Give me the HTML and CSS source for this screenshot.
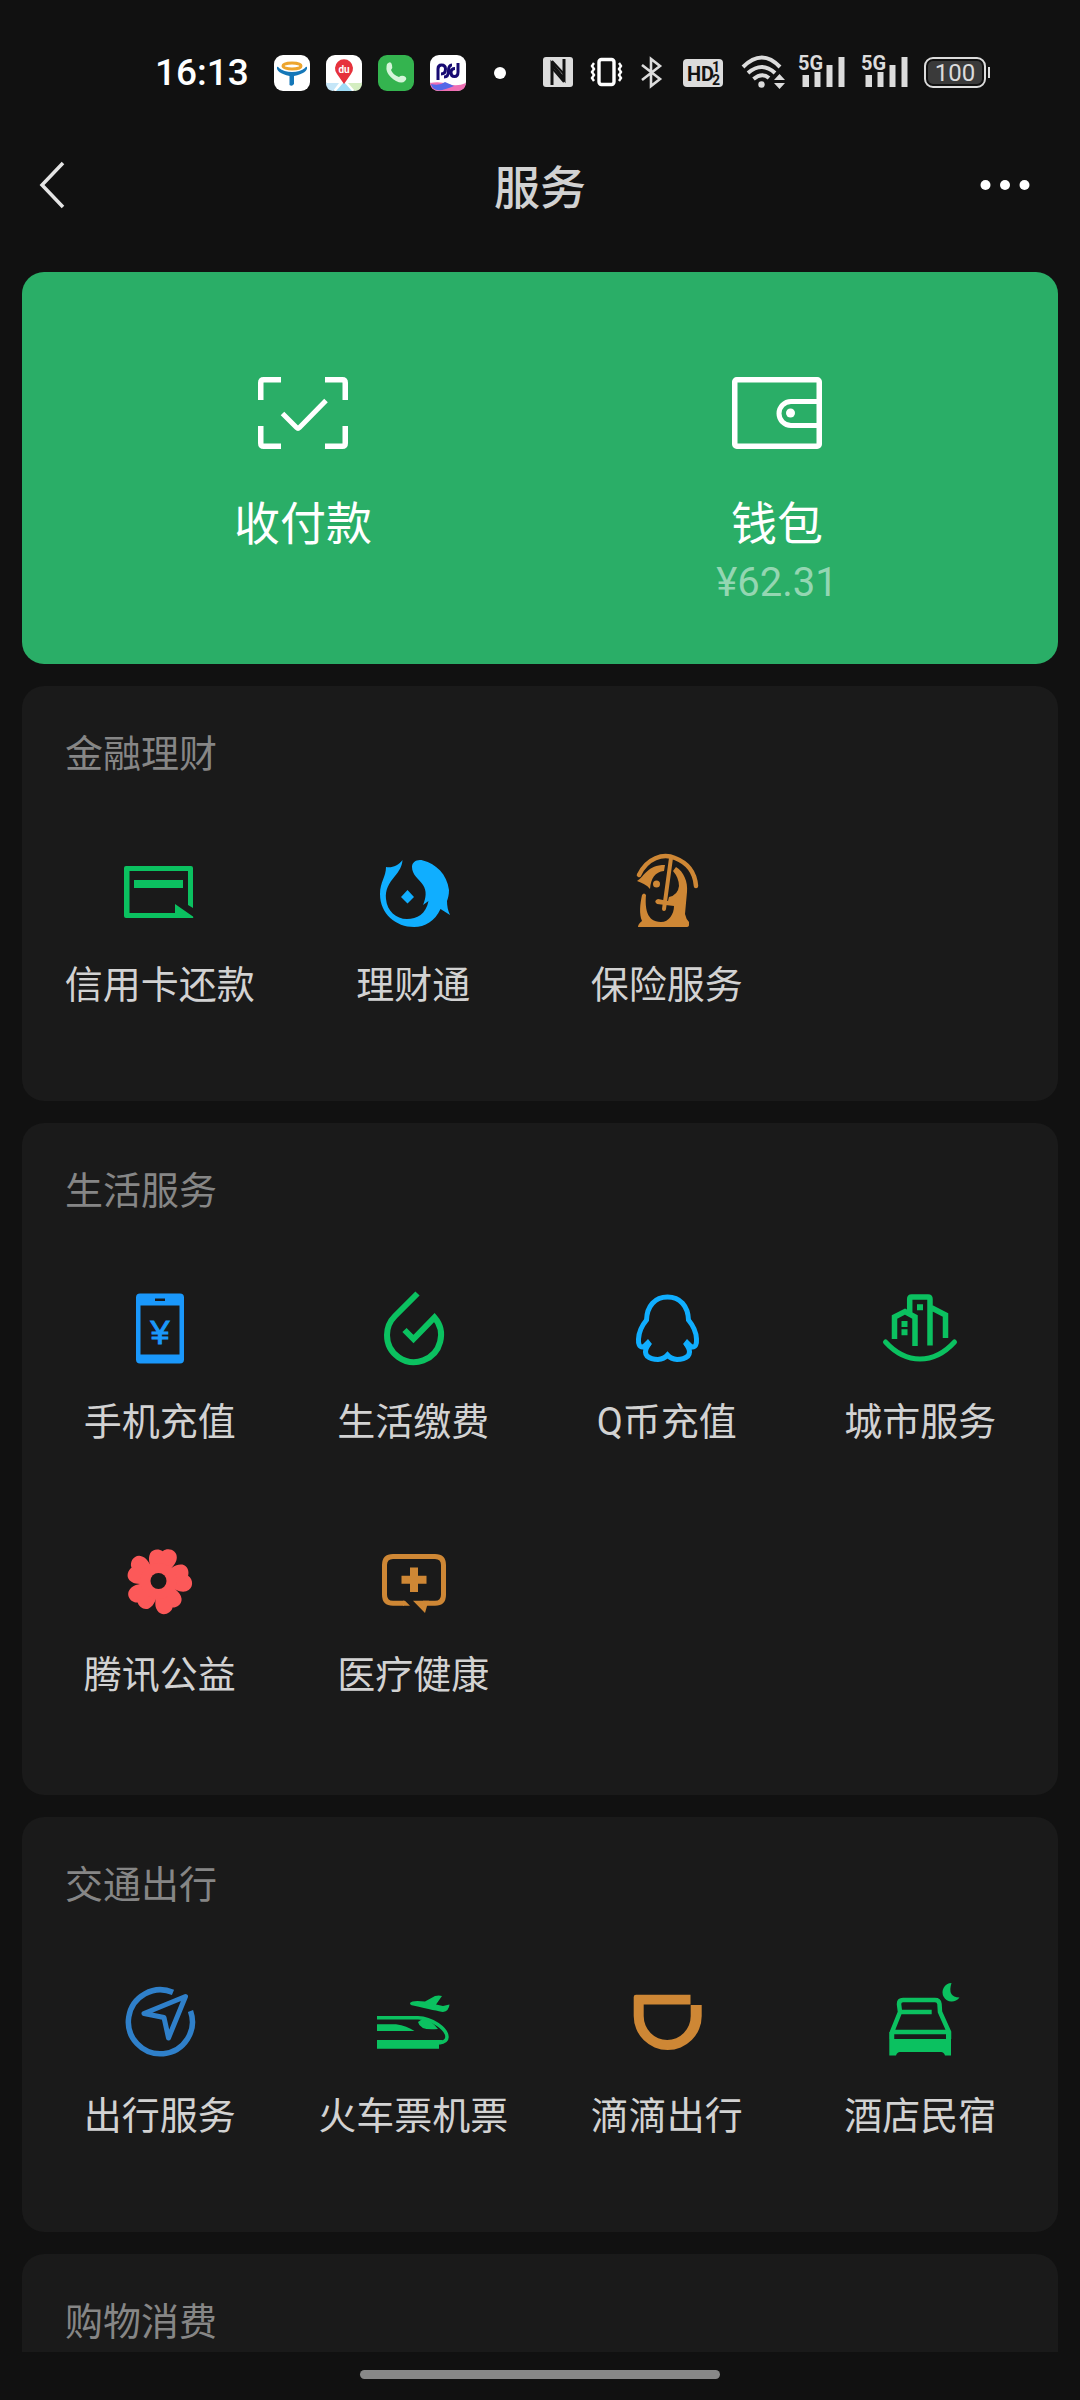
FILE: index.html
```html
<!DOCTYPE html>
<html lang="zh-CN">
<head>
<meta charset="utf-8">
<meta name="viewport" content="width=device-width, initial-scale=1">
<title>服务</title>
<link rel="stylesheet" href="styles.css">
</head>
<body>
<div class="screen">
  <div class="status">
    <div class="status-group">
      <time class="clock">16:13</time>
      <svg width="36" height="36" viewBox="0 0 36 36" aria-hidden="true">
        <rect width="36" height="36" rx="9" fill="#fff"/>
        <ellipse cx="18" cy="11" rx="9" ry="3" fill="none" stroke="#eda52d" stroke-width="3"/>
        <path d="M3 12Q4 11 5 13Q10 17 18 17T31 13Q32 11 33 12Q34 18 20 21V29Q18 32 15.500 30V21Q2 18 3 12Z" fill="#1477b8"/>
      </svg>
      <svg width="36" height="36" viewBox="0 0 36 36" aria-hidden="true">
        <rect width="36" height="36" rx="9" fill="#fff"/>
        <path d="M0 28H13L7 36Q0 35 0 28Z" fill="#c5e6f8"/>
        <path d="M22 28H36Q36 35 29 36Z" fill="#d3edc0"/>
        <path d="M18 27L26 36H10Z" fill="#9fdcf6"/>
        <path d="M18 29L11 19A9 9 0 1 1 25 19Z" fill="#e6323c"/>
        <text x="18" y="18" text-anchor="middle" class="pin-text">du</text>
      </svg>
      <svg width="36" height="36" viewBox="0 0 36 36" aria-hidden="true">
        <rect width="36" height="36" rx="9" fill="#34b44f"/>
        <path d="M9 9Q13 5 14 10Q15 13 13 15Q15 20 21 22Q23 20 26 21Q30 23 27 26Q24 29 18 26Q6 19 9 9Z" fill="#d5f5d9"/>
      </svg>
      <svg width="36" height="36" viewBox="0 0 36 36" aria-hidden="true">
        <rect width="36" height="36" rx="9" fill="#fff"/>
        <path d="M0 28Q9 26 18 29T36 28Q35 36 27 36H9Q1 36 0 28Z" fill="#ef6fb4"/>
        <path d="M1 29Q10 31 15 27L24 31Q13 36 7 35Q2 34 1 29Z" fill="#5468e8"/>
        <path d="M8 25V14Q8 10 11.500 10Q15.500 10 15.500 14Q15.500 19 11 19M14 22Q18.500 22 18.500 16Q18.500 10 22 10M28 8V17Q28 21.500 24.500 21.500Q21 21.500 21 17.500Q21 13.500 25 13.500" fill="none" stroke="#170a72" stroke-width="3"/>
      </svg>
      <span class="more-dot"></span>
    </div>
    <div class="status-group">
      <svg width="30" height="36" viewBox="0 0 30 36" aria-hidden="true">
        <rect y="2" width="30" height="30" rx="3" fill="#dcdcdc"/>
        <path d="M9 30V9L21 24V4" fill="none" stroke="#111" stroke-width="3"/>
        <path d="M9 6L21 19M9 13L21 27" stroke="#111" stroke-width="2"/>
      </svg>
      <svg width="35" height="36" viewBox="0 0 35 36" aria-hidden="true">
        <rect x="10" y="4.500" width="15" height="25" rx="2.500" fill="none" stroke="#fff" stroke-width="3.400"/>
        <path d="M5 8L3 11L5 14L3 17L5 20L3 23L5 26M30 8L32 11L30 14L32 17L30 20L32 23L30 26" fill="none" stroke="#fff" stroke-width="2.400"/>
      </svg>
      <svg width="25" height="36" viewBox="0 0 25 36" aria-hidden="true">
        <path d="M2 10L20 24L11 31V4L20 11L2 25" fill="none" stroke="#dcdcdc" stroke-width="2.600"/>
      </svg>
      <svg width="42" height="36" viewBox="0 0 42 36" aria-hidden="true">
        <rect x="2" y="4" width="40" height="28" rx="4" fill="#dcdcdc"/>
        <text x="6" y="26" class="hd-text">HD</text>
        <text x="31" y="17" class="hd-digit">1</text>
        <text x="31" y="30" class="hd-digit">2</text>
      </svg>
      <svg width="43" height="36" viewBox="0 0 43 36" aria-hidden="true">
        <path d="M4 12Q23 -7 41 12M9 18Q23 6 36 18M14.500 24Q23 17 30 23" fill="none" stroke="#dcdcdc" stroke-width="4"/>
        <circle cx="22.500" cy="29.500" r="3.200" fill="#dcdcdc"/>
        <path d="M35 25L40.500 19L46 25ZM35 28H46L40.500 34Z" fill="#dcdcdc"/>
      </svg>
      <svg width="47" height="36" viewBox="0 0 47 36" aria-hidden="true">
        <text x="0" y="15" class="net-text">5G</text>
        <path d="M4.500 20H11V32H4.500ZM16.500 17H22.500V32H16.500ZM28.500 10H34.500V32H28.500ZM40.500 2H46.500V32H40.500Z" fill="#dcdcdc"/>
      </svg>
      <svg width="47" height="36" viewBox="0 0 47 36" aria-hidden="true">
        <text x="0" y="15" class="net-text">5G</text>
        <path d="M4.500 20H11V32H4.500ZM16.500 17H22.500V32H16.500ZM28.500 10H34.500V32H28.500ZM40.500 2H46.500V32H40.500Z" fill="#dcdcdc"/>
      </svg>
      <svg width="66" height="36" viewBox="0 0 66 36" aria-hidden="true">
        <rect x="1" y="3" width="60" height="29" rx="8" fill="none" stroke="#dcdcdc" stroke-width="2"/>
        <rect x="4" y="6" width="54" height="23" rx="5" fill="#3a3a3a"/>
        <path d="M65 12V23" stroke="#dcdcdc" stroke-width="2"/>
        <text x="31" y="26" text-anchor="middle" class="battery-text">100</text>
      </svg>
    </div>
  </div>

  <header class="header">
    <button class="icon-button" type="button" aria-label="返回">
      <svg width="28" height="48" viewBox="0 0 28 48"><path d="M25 2L4 24L25 46" fill="none" stroke="#e4e4e4" stroke-width="3.500"/></svg>
    </button>
    <h1 class="title">服务</h1>
    <button class="icon-button" type="button" aria-label="更多">
      <svg width="50" height="48" viewBox="0 0 50 48"><g fill="#fff"><circle cx="5.500" cy="24" r="5"/><circle cx="25" cy="24" r="5"/><circle cx="44.500" cy="24" r="5"/></g></svg>
    </button>
  </header>

  <main class="content">
    <nav class="wallet">
      <a class="wallet-item" href="#pay">
        <svg width="90" height="72" viewBox="0 0 90 72" fill="none" stroke="#fff" stroke-width="5.500">
          <path d="M2.750 23V5.750Q2.750 2.750 5.750 2.750H23M67 2.750H84.250Q87.250 2.750 87.250 5.750V23M87.250 49V66.250Q87.250 69.250 84.250 69.250H67M23 69.250H5.750Q2.750 69.250 2.750 66.250V49"/>
          <path d="M24.500 36.500L38.500 50.500Q40 52 41.500 50.500L68 23.500" stroke-width="5"/>
        </svg>
        <span class="wallet-label">收付款</span>
      </a>
      <a class="wallet-item" href="#wallet">
        <svg width="90" height="72" viewBox="0 0 90 72" fill="none" stroke="#fff" stroke-width="5.500">
          <rect x="2.750" y="2.750" width="84.500" height="66.500" rx="2"/>
          <path d="M87 24.500H59A12 12 0 0 0 59 48.500H87" stroke-width="5"/>
          <circle cx="58.500" cy="36" r="4.500" fill="#fff" stroke="none"/>
        </svg>
        <span class="wallet-label">钱包</span>
        <span class="wallet-amount">¥62.31</span>
      </a>
    </nav>

    <section class="card">
      <h2 class="card-title">金融理财</h2>
      <ul class="tiles">
        <li><a class="tile" href="#credit">
          <svg class="tile-icon green" viewBox="0 0 80 80"><path d="M73 56V16Q73 14 71 14H6Q4 14 4 16V64Q4 66 6 66H72Q74 66 73 64.500L55 52V61H9.500V19H68V53ZM14 28H63V36H14Z"/></svg>
          <span class="tile-label">信用卡还款</span></a></li>
        <li><a class="tile" href="#licaitong">
          <svg class="tile-icon sky" viewBox="0 0 80 80"><path d="M29.500 8C29 15 26 19 22 24C16 31 12 38 13 47C14 59 23 67 34 67C44 67 53 62 55.500 49L50 53C53 46 54 39 50 33C46 27 39 23 39 15C39 10 44 7 50 8.500C63 12 74 22 76 38C76 43 75 46 74 49C74 54 75 59 77 63L67.500 57C62 69 52 75 41 75C23 75 7 62 7 42C7 30 13 25 13 15C19 16 25 14 29.500 8ZM34.500 38L41 45L34.500 51.500L28 45Z"/></svg>
          <span class="tile-label">理财通</span></a></li>
        <li><a class="tile" href="#insurance">
          <svg class="tile-icon orange" viewBox="0 0 80 80">
            <path d="M12 23C20 6 36 1 48 6C61 11 68 21 69 34" fill="none" stroke="currentColor" stroke-width="4.500" stroke-linecap="round"/>
            <path d="M44 6L37 57" fill="none" stroke="currentColor" stroke-width="4" stroke-linecap="round"/>
            <path d="M49 15C57 20 61 30 60 40L58 62Q59 67 62 70V73Q62 75 59 75H11Q11 72 15 69C12 62 13 52 15 43Q17 40 19 43C18 55 19 70 34 70C42 70 47 62 47 54L30 52Q26 49 31 47L41 49L42 45Q51 43 52 34Q52 26 46 19Z"/>
            <path d="M10 29C18 24 20 13 38 13L37 19C28 20 24 26 23 37C20 33 15 31 10 29Z"/>
            <circle cx="29.500" cy="32" r="3.500"/>
          </svg>
          <span class="tile-label">保险服务</span></a></li>
      </ul>
    </section>

    <section class="card card-tall">
      <h2 class="card-title">生活服务</h2>
      <ul class="tiles">
        <li><a class="tile" href="#topup">
          <svg class="tile-icon blue" viewBox="0 0 80 80"><path fill-rule="evenodd" d="M20 4.500H60Q64 4.500 64 8.500V70.500Q64 74.500 60 74.500H20Q16 74.500 16 70.500V8.500Q16 4.500 20 4.500ZM20.500 16.500V65.500H59.500V16.500ZM35 9.500V12H45V9.500Z"/><text x="40" y="55" text-anchor="middle" class="yen">¥</text></svg>
          <span class="tile-label">手机充值</span></a></li>
        <li><a class="tile" href="#bills">
          <svg class="tile-icon line green" viewBox="0 0 80 80"><path d="M44.500 4.500L22 27Q14 35 14 46A27 27 0 1 0 61.500 28.500L40.500 50L31.500 41" stroke-width="6"/></svg>
          <span class="tile-label">生活缴费</span></a></li>
        <li><a class="tile" href="#qcoin">
          <svg class="tile-icon line sky" viewBox="0 0 80 80">
            <path d="M40.500 8C28 8 20 17 19.500 31Q12 40 11.500 50Q11 58 15.500 58L20 58Q17 63 20 67Q24 70.500 31 70.500Q37 70 40.500 66Q44 70 50 70.500Q57 70.500 61 67Q64 63 61 58L65.500 58Q70 58 69.500 50Q69 40 61.500 31C61 17 53 8 40.500 8Z" stroke-width="5"/>
            <path d="M15 56L21 50L25 55L20 60ZM66 56L60 50L56 55L61 60Z" fill="currentColor" stroke="none"/>
          </svg>
          <span class="tile-label">Q币充值</span></a></li>
        <li><a class="tile" href="#city">
          <svg class="tile-icon line green" viewBox="0 0 80 80">
            <path d="M14.500 50V28L25 22.500L35 28V57M29.700 24V10Q29.700 8 31.700 8H48Q50 8 50 10V56.500M50 18L65.500 26V49" stroke-width="5.500"/>
            <path d="M5.500 53Q21 70 40 70T74.500 53" stroke-width="5" stroke-linecap="round"/>
            <path d="M37 18.300H43M21.500 35H27.500M21.500 43.300H27.500" stroke-width="6"/>
          </svg>
          <span class="tile-label">城市服务</span></a></li>
        <li><a class="tile" href="#charity">
          <svg class="tile-icon red" viewBox="0 0 80 80">
            <defs><path id="petal" d="M-10 -10C-10 -14 -15 -19 -13 -26C-11 -31 -5 -32 -1 -30C3 -35 13 -34 14 -26C15 -19 9 -15 9 -10Z"/></defs>
            <g transform="translate(38.500 39)">
              <use href="#petal" transform="rotate(10)"/><use href="#petal" transform="rotate(82)"/><use href="#petal" transform="rotate(154)"/><use href="#petal" transform="rotate(226)"/><use href="#petal" transform="rotate(298)"/>
              <circle r="18"/><circle r="8" fill="#1a1a1a"/>
            </g>
          </svg>
          <span class="tile-label">腾讯公益</span></a></li>
        <li><a class="tile" href="#health">
          <svg class="tile-icon orange" viewBox="0 0 80 80">
            <path d="M31 61.200H20Q11.500 61.200 11.500 52.700V23Q11.500 14.500 20 14.500H62Q70.500 14.500 70.500 23V52.700Q70.500 61.200 62 61.200H50" fill="none" stroke="currentColor" stroke-width="5"/>
            <path d="M30 58.700H32L37 63.700H30ZM40 58.700H56L54 64L52 71ZM37 25.500H45V33.700H53.500V41.700H45V50H37V41.700H28.500V33.700H37Z"/>
          </svg>
          <span class="tile-label">医疗健康</span></a></li>
      </ul>
    </section>

    <section class="card">
      <h2 class="card-title">交通出行</h2>
      <ul class="tiles">
        <li><a class="tile" href="#travel">
          <svg class="tile-icon line steel" viewBox="0 0 80 80"><path d="M53 9.400A32 32 0 1 0 70.500 28" stroke-width="5.500"/><path d="M65.500 13.500L24 30.500L44 34.500L48.500 55Z" stroke-width="5" stroke-linejoin="round"/></svg>
          <span class="tile-label">出行服务</span></a></li>
        <li><a class="tile" href="#tickets">
          <svg class="tile-icon green" viewBox="0 0 80 80">
            <path d="M4 34.700H45C59 35 74 46 74 54Q74 59 66 60" fill="none" stroke="currentColor" stroke-width="3.500"/>
            <path d="M4 57H70L66 61V65.700H4ZM4 41.300H23Q34 43 41.500 48H4ZM45 39Q50 34 57 38Q62 42 65 46Q47 48 45 39Z"/>
            <path d="M37 20Q39 17 52 18.500L62 13Q66 12 69 13L63 21.500L70 23L76.500 21.500Q76 28 70 29Q64 28 40 22.500Q37 22 37 20Z"/>
          </svg>
          <span class="tile-label">火车票机票</span></a></li>
        <li><a class="tile" href="#didi">
          <svg class="tile-icon orange" viewBox="0 0 80 80"><path d="M9 11.700H63.500V21.500H16.700V33A23.500 24 0 0 0 63.700 33V22H74.700V33A34 34 0 0 1 6.700 33V14Q6.700 11.700 9 11.700Z"/></svg>
          <span class="tile-label">滴滴出行</span></a></li>
        <li><a class="tile" href="#hotel">
          <svg class="tile-icon green" viewBox="0 0 80 80">
            <path d="M51.700 29H20M13 49H68M12 56V49L20 29L19 21Q19 17 23 17H55Q59 17 59.500 21L60 29L69 49V56" fill="none" stroke="currentColor" stroke-width="4.500"/>
            <path d="M9.300 49H14V56H66V49H71V72.500H65Q64 69 61 69H20Q17 69 16 72.500H9.300Z"/>
            <path d="M71.500 0A9.300 9.300 0 1 0 79.500 14.500Q67 14 71.500 0Z"/>
          </svg>
          <span class="tile-label">酒店民宿</span></a></li>
      </ul>
    </section>

    <section class="card">
      <h2 class="card-title">购物消费</h2>
    </section>
  </main>

  <div class="gesture-bar"><span class="gesture-handle"></span></div>
</div>
</body>
</html>
```

FILE: styles.css
```css
* {
  box-sizing: border-box;
}

body {
  margin: 0;
  background: #111;
  color: #d2d2d2;
  font-family: Roboto, "Noto Sans CJK SC", sans-serif;
}

h1, h2, ul {
  margin: 0;
  padding: 0;
  font-weight: 400;
  list-style: none;
}

a {
  color: inherit;
  text-decoration: none;
}

svg {
  display: block;
  overflow: visible;
}

.screen {
  display: flex;
  flex-direction: column;
  height: 100vh;
}

/* Status bar */
.status {
  display: flex;
  flex: none;
  align-items: center;
  justify-content: space-between;
  height: 112px;
  padding: 34px 90px 0 155px;
}

.status-group {
  display: flex;
  align-items: center;
  gap: 16px;
}

.clock {
  margin-right: 9px;
  color: #fff;
  font-size: 37px;
  font-weight: 500;
  line-height: 40px;
}

.more-dot {
  width: 12px;
  height: 12px;
  margin-left: 12px;
  border-radius: 50%;
  background: #fff;
}

.pin-text {
  fill: #fff;
  font-size: 10px;
  font-weight: 700;
}

.hd-text {
  fill: #111;
  font: 700 20px "Liberation Sans Narrow", Roboto, sans-serif;
}

.hd-digit {
  fill: #111;
  font-size: 14px;
  font-weight: 700;
}

.net-text {
  fill: #dcdcdc;
  font: 700 20px "Liberation Sans Narrow", Roboto, sans-serif;
}

.battery-text {
  fill: #dcdcdc;
  font-size: 24px;
}

/* Page header */
.header {
  display: grid;
  flex: none;
  grid-template-columns: 1fr auto 1fr;
  align-items: center;
  height: 160px;
  padding: 0 38px 14px;
}

.icon-button {
  padding: 0;
  border: 0;
  background: none;
  cursor: pointer;
}

.icon-button:first-child {
  justify-self: start;
}

.icon-button:last-child {
  justify-self: end;
  margin-right: 12px;
}

.title {
  padding-top: 6px;
  font-size: 46px;
  font-weight: 500;
  line-height: 64px;
}

/* Scrolling content */
.content {
  flex: 1;
  min-height: 0;
  padding: 0 22px;
  overflow-y: auto;
  scrollbar-width: none;
}

.wallet {
  display: grid;
  grid-template-columns: 1fr 1fr;
  min-height: 392px;
  padding: 105px 44px 50px;
  border-radius: 22px;
  background: #2aae67;
  color: #fff;
}

.wallet-item {
  display: flex;
  flex-direction: column;
  align-items: center;
}

.wallet-label {
  margin-top: 43px;
  font-size: 46px;
  line-height: 64px;
}

.wallet-amount {
  color: #94d6b2;
  font-size: 40px;
  line-height: 54px;
}

.card {
  margin-top: 22px;
  padding: 41px 11px 89px;
  border-radius: 22px;
  background: #1a1a1a;
}

.card-tall {
  padding-bottom: 93px;
}

.card-title {
  padding-left: 32px;
  color: #868686;
  font-size: 38px;
  line-height: 54px;
}

.tiles {
  display: grid;
  grid-template-columns: repeat(4, 1fr);
  row-gap: 93px;
  margin-top: 71px;
}

.tile {
  display: flex;
  flex-direction: column;
  align-items: center;
}

.tile-icon {
  width: 80px;
  height: 80px;
  fill: currentColor;
}

.tile-icon.line {
  fill: none;
  stroke: currentColor;
}

.tile-label {
  margin-top: 26px;
  font-size: 38px;
  line-height: 54px;
  white-space: nowrap;
}

.yen {
  font: 400 34px "Liberation Sans", sans-serif;
  stroke: currentColor;
}

.green { color: #0bc160; }
.sky { color: #10aeff; }
.blue { color: #1a98fb; }
.steel { color: #2f80ca; }
.orange { color: #ce8735; }
.red { color: #fc5959; }

/* System gesture bar */
.gesture-bar {
  display: flex;
  flex: none;
  align-items: center;
  justify-content: center;
  height: 48px;
  padding-bottom: 3px;
}

.gesture-handle {
  width: 33.333%;
  height: 9px;
  border-radius: 5px;
  background: #888;
}
```
